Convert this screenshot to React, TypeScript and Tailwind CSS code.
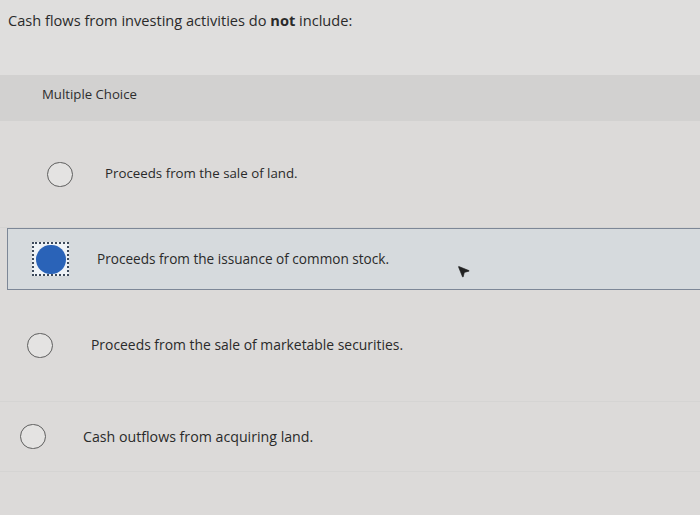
import { MousePointer2 } from 'lucide-react';

const options = [
  { id: 'a', text: 'Proceeds from the sale of land.', row: 'h-[107px] pl-[47px] gap-[32px]', size: 'text-[13.3px]' },
  { id: 'b', text: 'Proceeds from the issuance of common stock.', selected: true, size: 'text-[13.6px]' },
  { id: 'c', text: 'Proceeds from the sale of marketable securities.', row: 'h-[112px] pl-[27px] gap-[38px]', size: 'text-[13.9px]' },
  { id: 'd', text: 'Cash outflows from acquiring land.', row: 'h-[70px] pl-[20px] gap-[37px]', size: 'text-[14.2px]' },
];

const Radio = ({ selected }: { selected?: boolean }) => {
  if (selected) {
    return (
      <div className="w-[37px] h-[34px] border-2 border-dotted border-[#3d4a5c] flex items-center justify-center bg-[#eef2f6]">
        <div className="w-[30px] h-[29px] rounded-full bg-[#2a63b8]" />
      </div>
    );
  }
  return <div className="w-[26px] h-[25px] rounded-full border-[1.5px] border-[#5e5e5e] bg-[#e4e3e2]" />;
};

export default function App() {
  return (
    <div className="relative w-[700px] h-[515px] overflow-hidden bg-[#dcdad9] text-[#2a2a2a] font-['Open_Sans','Liberation_Sans',sans-serif]">
      <div className="h-[75px] pt-[10px] pl-[8px] text-[14.6px] bg-[#dfdedd]">
        Cash flows from investing activities do <span className="font-bold">not</span> include:
      </div>

      <div className="h-[46px] bg-[#d2d1d0] pl-[42px] pt-[10px] text-[13.2px] text-[#2e2e2e]">Multiple Choice</div>

      <div>
        {options.map(o =>
          o.selected ? (
            <div key={o.id} className="h-[62px] ml-[7px] border-[1.5px] border-r-0 border-[#7d8797] bg-[#d6dadd] flex items-center pl-[24px] gap-[28px]">
              <Radio selected />
              <span className={`${o.size} text-[#2a2a2a]`}>{o.text}</span>
            </div>
          ) : (
            <div key={o.id} className={`${o.row} flex items-center border-b border-[#d5d4d3]`}>
              <Radio />
              <span className={`${o.size} text-[#2a2a2a]`}>{o.text}</span>
            </div>
          )
        )}
      </div>

      <div className="absolute left-[456px] top-[264px] text-[#222]">
        <MousePointer2 size={15} fill="#222" strokeWidth={1} />
      </div>
    </div>
  );
}
